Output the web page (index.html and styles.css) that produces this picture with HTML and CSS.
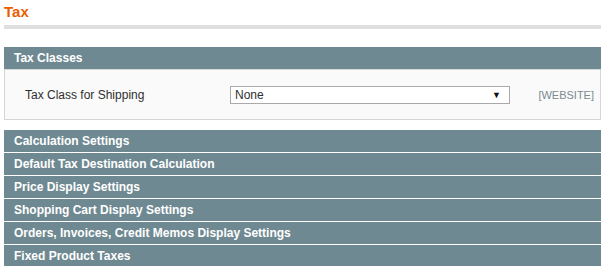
FILE: index.html
```html
<!DOCTYPE html>
<html lang="en">
<head>
  <meta charset="UTF-8">
  <meta name="viewport" content="width=device-width, initial-scale=1.0">
  <title>Tax</title>
  <link rel="stylesheet" href="styles.css">
</head>
<body>
  <div class="content-header">
    <h3>Tax</h3>
  </div>

  <div class="section">
    <div class="section-head">Tax Classes</div>
    <div class="section-body">
      <div class="field-row">
        <label class="field-label" for="shippingClass">Tax Class for Shipping</label>
        <div class="select-box" id="shippingClass">
          <span>None</span>
          <span class="arrow">&#9660;</span>
        </div>
        <span class="scope">[WEBSITE]</span>
      </div>
    </div>
  </div>

  <div class="section-list">
    <div class="section-head">Calculation Settings</div>
    <div class="section-head">Default Tax Destination Calculation</div>
    <div class="section-head">Price Display Settings</div>
    <div class="section-head">Shopping Cart Display Settings</div>
    <div class="section-head">Orders, Invoices, Credit Memos Display Settings</div>
    <div class="section-head">Fixed Product Taxes</div>
  </div>
</body>
</html>
```

FILE: styles.css
```css
body {
  font-family: "Liberation Sans", Arial, sans-serif;
  font-size: 12px;
  color: #2f2f2f;
  margin: 0;
  padding: 0 3px 0 4px;
  background-color: #ffffff;
}
.content-header {
  border-bottom: 4px solid #dfdfdf;
  margin-bottom: 18px;
  padding-top: 3px;
  height: 22px;
}
.content-header h3 {
  margin: 0;
  font-size: 15px;
  line-height: 18px;
  font-weight: bold;
  color: #eb5e00;
}
.section {
  margin-bottom: 10px;
}
.section-head {
  background-color: #6f8992;
  color: #ffffff;
  font-weight: bold;
  font-size: 12px;
  line-height: 22px;
  height: 22px;
  padding: 0 10px;
}
.section-body {
  background-color: #fafafa;
  border: 1px solid #d6d6d6;
  height: 49px;
  display: flex;
  align-items: center;
}
.field-row {
  display: flex;
  align-items: center;
  width: 100%;
}
.field-label {
  width: 205px;
  padding-left: 20px;
  color: #2f2f2f;
}
.select-box {
  width: 266px;
  height: 16px;
  border: 1px solid #aaaaaa;
  background-color: #ffffff;
  display: flex;
  justify-content: space-between;
  align-items: center;
  padding: 0 8px 0 4px;
  color: #2f2f2f;
}
.select-box .arrow {
  font-size: 9px;
  color: #111111;
}
.scope {
  margin-left: auto;
  padding-right: 6px;
  font-size: 11px;
  color: #7b8a90;
}
.section-list {
  display: flex;
  flex-direction: column;
  gap: 1px;
}
```
